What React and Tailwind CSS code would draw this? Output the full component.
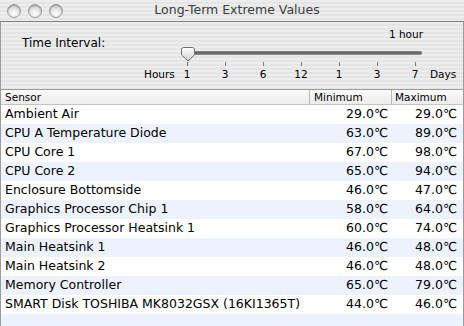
import React from 'react';

const rows = [
    ['Ambient Air', '29.0', '29.0'],
    ['CPU A Temperature Diode', '63.0', '89.0'],
    ['CPU Core 1', '67.0', '98.0'],
    ['CPU Core 2', '65.0', '94.0'],
    ['Enclosure Bottomside', '46.0', '47.0'],
    ['Graphics Processor Chip 1', '58.0', '64.0'],
    ['Graphics Processor Heatsink 1', '60.0', '74.0'],
    ['Main Heatsink 1', '46.0', '48.0'],
    ['Main Heatsink 2', '46.0', '48.0'],
    ['Memory Controller', '65.0', '79.0'],
    ['SMART Disk TOSHIBA MK8032GSX (16KI1365T)', '44.0', '46.0'],
];

const ticks = ['1', '3', '6', '12', '1', '3', '7'];

const stripes =
    'bg-[repeating-linear-gradient(180deg,#ededed_0px,#ededed_2px,#e5e5e5_2px,#e5e5e5_4px)]';

function Light() {
    return (
        <div className="w-[14px] h-[14px] rounded-full border border-[#9a9a9a] bg-[radial-gradient(circle_at_50%_70%,#ffffff_0%,#e6e6e6_45%,#b9b9b9_100%)] shadow-[inset_0_1px_1px_rgba(0,0,0,0.25)]" />
    );
}

function Thumb() {
    return (
        <svg width="14" height="15" viewBox="0 0 14 15">
            <defs>
                <linearGradient id="tg" x1="0" y1="0" x2="0" y2="1">
                    <stop offset="0" stopColor="#ffffff" />
                    <stop offset="0.6" stopColor="#e4e4e4" />
                    <stop offset="1" stopColor="#c8c8c8" />
                </linearGradient>
            </defs>
            <path d="M2.5 0.5 H11.5 Q13.5 0.5 13.5 2.5 V8 L7 14 L0.5 8 V2.5 Q0.5 0.5 2.5 0.5 Z" fill="url(#tg)" stroke="#6e6e6e" strokeWidth="1" />
        </svg>
    );
}

export default function App() {
    return (
        <div className="w-[464px] h-[326px] overflow-hidden bg-white flex flex-col font-['DejaVu_Sans',sans-serif] text-black">
            {/* Title bar */}
            <div className={`h-[22px] shrink-0 relative flex items-center border-b border-[#7e7e7e] ${stripes}`}>
                <div className="flex gap-[7px] pl-[7px]">
                    <Light />
                    <Light />
                    <Light />
                </div>
                <div className="absolute inset-0 flex items-center justify-center text-[12.5px] text-[#3c3c3c] pl-[10px]">
                    Long-Term Extreme Values
                </div>
            </div>

            {/* Interval panel */}
            <div className={`h-[67px] shrink-0 flex border-x border-[#9c9c9c] ${stripes}`}>
                <div className="w-[143px] pl-[21px] pt-[14px] text-[12px] leading-[14px]">Time Interval:</div>
                <div className="flex flex-col pt-[6px]">
                    <div className="w-[279px] text-right text-[10.5px] leading-[13px]">1 hour</div>
                    <div className="relative h-[15px] mt-[6px]">
                        <div className="absolute left-[40px] top-[4px] w-[238px] h-[4px] rounded-full bg-[linear-gradient(180deg,#8a8a8a,#5e5e5e_50%,#9a9a9a)]" />
                        <div className="absolute left-[37px] top-0">
                            <Thumb />
                        </div>
                    </div>
                    <div className="flex items-end">
                        <div className="w-[33px] text-[10.5px] leading-[13px]">Hours</div>
                        <div className="w-[248px] flex justify-between">
                            {ticks.map((t, i) => (
                                <div key={i} className="w-[20px] flex flex-col items-center">
                                    <div className="w-px h-[4px] bg-[#7a7a7a]" />
                                    <div className="mt-[2px] text-[10.5px] leading-[13px]">{t}</div>
                                </div>
                            ))}
                        </div>
                        <div className="ml-[5px] text-[10.5px] leading-[13px]">Days</div>
                    </div>
                </div>
            </div>

            {/* Table */}
            <div className="flex-1 flex flex-col border-x border-[#9c9c9c]">
                <div className="h-[16px] shrink-0 flex border-t border-[#9a9a9a] border-b border-b-[#c4c4c4] bg-[linear-gradient(180deg,#fbfbfb,#ececec)] text-[10.5px] leading-[14px]">
                    <div className="w-[309px] pl-[4px] border-r border-[#b8b8b8]">Sensor</div>
                    <div className="w-[82px] pl-[4px] border-r border-[#b8b8b8]">Minimum</div>
                    <div className="flex-1 pl-[3px]">Maximum</div>
                </div>
                {rows.map(([name, min, max], i) => (
                    <div
                        key={name}
                        className={`h-[19px] shrink-0 flex items-center text-[12.5px] ${i % 2 === 1 ? 'bg-[#edf3fe]' : 'bg-white'}`}
                    >
                        <div className="w-[309px] pl-[4px] whitespace-nowrap">{name}</div>
                        <div className="w-[83px] pr-[5px] text-right">{min}℃</div>
                        <div className="flex-1 pr-[6px] text-right">{max}℃</div>
                    </div>
                ))}
                <div className="flex-1 bg-[#edf3fe]" />
            </div>
        </div>
    );
}
